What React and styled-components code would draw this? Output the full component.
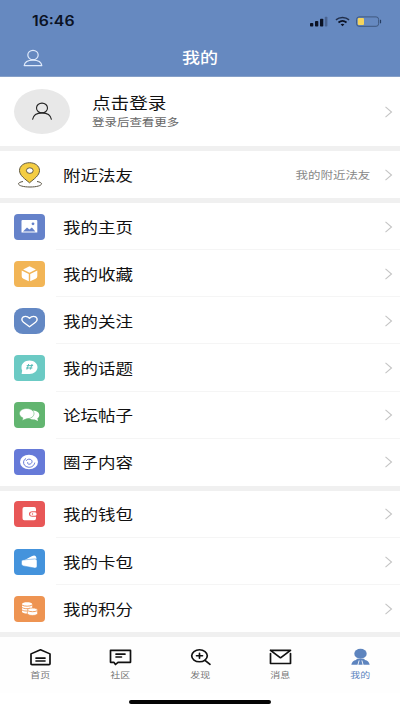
import React from "react";
import styled, { createGlobalStyle } from "styled-components";

const GlobalStyle = createGlobalStyle`
  * { box-sizing: border-box; }
  body {
    margin: 0;
    background: #fff;
    font-family: "Noto Sans CJK SC", "Noto Sans", sans-serif;
    color: #111;
  }
`;

const Screen = styled.div`
  width: 400px;
  height: 711px;
  overflow: hidden;
  display: flex;
  flex-direction: column;
  background: #fff;
`;

const Header = styled.header`
  height: 77px;
  flex: none;
  background: #6689c0;
  border-bottom: 1px solid #86a0c8;
`;

const StatusBar = styled.div`
  height: 40px;
  padding: 2px 18px 0 32px;
  display: flex;
  align-items: center;
  justify-content: space-between;
`;

const Clock = styled.span`
  font: 600 14px/20px Inter, sans-serif;
  color: #0b1224;
  transform: scaleX(1.13);
  transform-origin: left;
`;

const StatusIcons = styled.div`
  display: flex;
  align-items: center;
  gap: 6.5px;
`;

const TitleBar = styled.div`
  height: 36px;
  padding: 0 23px;
  display: grid;
  grid-template-columns: 1fr auto 1fr;
  align-items: center;
`;

const Title = styled.h1`
  margin: -2px 0 0;
  font-size: 15px;
  line-height: 22px;
  font-weight: 500;
  color: #fff;
  transform: scaleX(1.2);
`;

const Stretch = styled.span`
  display: block;
  white-space: nowrap;
  font-size: ${(p) => p.$size}px;
  line-height: ${(p) => p.$line || 20}px;
  color: ${(p) => p.$color || "#111"};
  transform: scaleX(${(p) => p.$x || 1.2});
  transform-origin: ${(p) => p.$origin || "left"};
`;

const Profile = styled.section`
  height: 69px;
  flex: none;
  padding: 0 7px 0 14px;
  display: flex;
  align-items: center;
`;

const Avatar = styled.div`
  width: 56px;
  height: 45px;
  border-radius: 50%;
  background: #e8e8e8;
  display: flex;
  align-items: center;
  justify-content: center;
`;

const ProfileText = styled.div`
  flex: 1;
  margin: -3px 0 0 21.5px;
`;

const Gap = styled.div`
  height: 5px;
  flex: none;
  background: #f0f0f0;
`;

const Row = styled.div`
  height: ${(p) => p.$height || 47.15}px;
  flex: none;
  padding-left: 14px;
  display: flex;
`;

const IconSlot = styled.div`
  width: 42px;
  display: flex;
  align-items: center;
`;

const RowBody = styled.div`
  flex: 1;
  padding: ${(p) => (p.$line ? "1px" : "0")} 7px 0 6.5px;
  display: flex;
  align-items: center;
  justify-content: space-between;
  border-bottom: ${(p) => (p.$line ? "1px solid #f5f5f5" : "none")};
`;

const RowEnd = styled.div`
  display: flex;
  align-items: center;
  gap: 14px;
`;

const Tile = styled.div`
  width: 31px;
  height: 26px;
  border-radius: ${(p) => p.$radius || "4px"};
  background: ${(p) => p.$color};
  display: flex;
`;

const TabBar = styled.nav`
  flex: none;
  height: 56px;
  padding-top: 11px;
  display: grid;
  grid-template-columns: repeat(5, 80px);
  background: #fefefe;
`;

const Tab = styled.div`
  display: flex;
  flex-direction: column;
  align-items: center;
`;

const HomeIndicator = styled.div`
  width: 142px;
  height: 4px;
  margin: 7px auto 0;
  border-radius: 2px;
  flex: none;
  background: #050505;
`;

const Chevron = () => (
  <svg width="9" height="12" viewBox="0 0 9 12" fill="none" stroke="#c4c4c4" strokeWidth="1.1">
    <path d="M1.5 .8 7.5 6 1.5 11.2" />
  </svg>
);

const glyphs = {
  picture: (
    <>
      <path fill="#fff" d="M8.500 6h13.800a1 1 0 0 1 1 1v11.500h-15.800V7a1 1 0 0 1 1-1Z" />
      <path fill="#6582ca" d="m9 17.500 4-4.100 2.400 2 2.500-1.800 3.500 3.900Z" />
      <circle cx="19" cy="9.800" r="1.400" fill="#6582ca" />
    </>
  ),
  box: (
    <g fill="#fff">
      <path d="m15.500 5.300 6.400 3.200-6.400 3.200-6.400-3.200Z" />
      <path d="m7.700 9.600 7.100 3.500v7.200l-5.400-2.600q-1.700-.8-1.700-2.400Z" />
      <path d="m23.300 9.600-7.100 3.500v7.200l5.400-2.600q1.700-.8 1.700-2.400Z" />
    </g>
  ),
  heart: (
    <path
      d="M15.500 18.800 9.500 14.300C6.400 11.700 8.200 8.300 11.400 8.300q2.600 0 4.100 2 1.500-2 4.100-2c3.200 0 5 3.400 1.900 6Z"
      fill="none" stroke="#fff" strokeWidth="1.300" strokeLinejoin="round"
    />
  ),
  topic: (
    <>
      <path fill="#fff" d="M15.500 5.600c4.500 0 8 2.900 8 6.600s-3.500 6.700-8 6.700H7.600l.6-3.300a6 6 0 0 1-.7-3.400c0-3.700 3.500-6.600 8-6.600Z" />
      <path stroke="#55bbb5" strokeWidth="1" d="m14.700 9-1.800 5.600M18.100 9l-1.800 5.600M12.700 10.600h6.400M12 13h6.400" />
    </>
  ),
  forum: (
    <>
      <path fill="#fff" d="M19.500 8.400c3.400.2 5.800 2.100 5.800 4.500 0 1.400-.7 2.600-1.900 3.400l.6 2.700-3.300-1.600c-3.900.4-6.700-1.300-6.900-3.700Z" />
      <path fill="#fff" stroke="#62b570" strokeWidth=".6" d="M12.600 6.500c4.200 0 7.400 2.200 7.400 5.100s-3.200 5.200-7.400 5.200l-4.500 1.800.8-2.700c-2.200-1-3.500-2.500-3.500-4.300 0-2.900 3-5.100 7.200-5.100Z" />
    </>
  ),
  circles: (
    <>
      <ellipse cx="15" cy="13" rx="9" ry="7.300" fill="#fff" />
      <g fill="none" stroke="#667ad8" strokeWidth="1" strokeLinecap="round">
        <path d="M20.700 14c-.8 3.300-3.700 4.600-6.500 4.200-3-.5-5-2.700-4.600-5.400.3-1.400 1-2.400 2-3.100" />
        <path d="M12.300 11.500c.9-1.600 3.800-1.900 5.200-.4 1.300 1.500.2 4-2.400 4.100-1.200 0-1.900-.9-1.500-1.700" />
      </g>
    </>
  ),
  wallet: (
    <>
      <path fill="#fff" d="M10.300 6h9.900q1.800 0 1.800 2v2.200h-3.500q-3.500 0-3.500 2.800t3.500 2.800H22v1.400q0 2-1.800 2h-9.900q-1.800 0-1.800-2V8q0-2 1.800-2Z" />
      <rect x="16.200" y="11.300" width="6.300" height="3.400" rx="1.500" fill="#fff" />
      <circle cx="18.500" cy="13" r=".7" fill="#e85757" />
    </>
  ),
  cards: (
    <>
      <path fill="#fff" d="m7.900 12.500 9.800-5.300q3.900-1.900 4.600 1.300l.3 1.300Z" />
      <path fill="#fff" stroke="#4493dc" strokeWidth=".5" d="M8.800 11 20.900 9.900q2.100-.1 2.100 1.800v5.600q0 2-2.200 1.800L9.300 16.900q-1.700-.3-1.800-2v-2.100q0-1.700 1.300-1.800Z" />
    </>
  ),
  coins: (
    <>
      <path fill="#fff" d="M8 8c0-2.500 10.200-2.500 10.200 0v7.700c0 2.400-10.200 2.400-10.200 0Z" />
      <path d="M8 9c2.200 1.600 8 1.600 10.200 0M8 11.500c2 1.400 5.600 1.500 8 .7M8 14c1.500 1 4 1.200 6 .9" fill="none" stroke="#ee9452" strokeWidth=".9" />
      <path fill="#fff" stroke="#ee9452" strokeWidth=".7" d="M13.400 14c0-2.600 10.200-2.600 10.200 0v3.500c0 2.600-10.200 2.600-10.200 0Z" />
      <path d="M14 14.800c2 1.200 7.100 1.200 9 0" fill="none" stroke="#ee9452" strokeWidth=".9" />
    </>
  ),
};

const Glyph = ({ name }) => (
  <svg width="31" height="26" viewBox="0 0 31 26">{glyphs[name]}</svg>
);

const personal = [
  ["我的主页", "picture", "#6582ca"],
  ["我的收藏", "box", "#f2b556"],
  ["我的关注", "heart", "#6388c4", "9px / 8px"],
  ["我的话题", "topic", "#6bcac4"],
  ["论坛帖子", "forum", "#62b570"],
  ["圈子内容", "circles", "#667ad8"],
];

const assets = [
  ["我的钱包", "wallet", "#e85757"],
  ["我的卡包", "cards", "#4493dc"],
  ["我的积分", "coins", "#ee9452"],
];

const Menu = ({ items }) =>
  items.map(([label, icon, color, radius], i) => (
    <Row key={label}>
      <IconSlot>
        <Tile $color={color} $radius={radius}><Glyph name={icon} /></Tile>
      </IconSlot>
      <RowBody $line={i < items.length - 1}>
        <Stretch $size={14.6}>{label}</Stretch>
        <Chevron />
      </RowBody>
    </Row>
  ));

const tabs = [
  ["首页", <path key="a" d="M2 6.200 11.500 1.800l9.500 4.400v10.300q0 1-1 1H3q-1 0-1-1ZM7 10.700h9M7 13.700h9" />],
  ["社区", <path key="b" d="M1.500 2.500h20v12.600H9l-2.500 2.300-1.500-2.300H1.500ZM7 6.500h9M7 9.500h5.500" />],
  ["发现", <g key="c"><ellipse cx="10.500" cy="8.200" rx="7.800" ry="6.300" /><path d="m16 13 5 4.200M7.500 8.200h6M10.500 5.700v5" /></g>],
  ["消息", <path key="d" d="M1.500 2.500h20l-10 7.800-10-7.800M1.500 5.800v10.500h20V5.800" />],
  ["我的", (
    <g key="e" fill="#5d84be" stroke="none">
      <ellipse cx="11.500" cy="6" rx="6.200" ry="5.200" />
      <path d="M8 11.300h7l1 1.200c2.500.6 4.200 2.200 4.700 5H2.300c.5-2.800 2.200-4.400 4.700-5Z" />
      <path d="M10 13.500 9 17.500M13 13.500l1 4" stroke="#fff" strokeWidth=".9" />
    </g>
  )],
];

export default function App() {
  return (
    <>
      <GlobalStyle />
      <Screen>
        <Header>
          <StatusBar>
            <Clock>16:46</Clock>
            <StatusIcons>
              <svg width="18" height="11" viewBox="0 0 18 11" fill="#0b1224">
                <rect x="0" y="7" width="3.300" height="3.500" rx=".8" />
                <rect x="5" y="5" width="3.300" height="5.500" rx=".8" />
                <rect x="10" y="2.700" width="3.300" height="7.800" rx=".8" />
                <rect x="14.800" y=".7" width="2.600" height="9.800" rx=".8" opacity=".3" />
              </svg>
              <svg width="15" height="11" viewBox="0 0 16 11" preserveAspectRatio="none" fill="none" stroke="#0b1224">
                <path d="M1 3.900C4.800.7 11.200.7 15 3.900" strokeWidth="1.400" opacity=".75" />
                <path d="M3.700 6.500c2.500-2 6.100-2 8.600 0" strokeWidth="1.700" />
                <path d="M6 8.300q2-1.300 4 0L8 10.200Z" fill="#0b1224" stroke="none" />
              </svg>
              <svg width="26" height="11" viewBox="0 0 26 11">
                <rect x=".6" y=".9" width="22" height="9.400" rx="2.500" fill="none" stroke="#3f587f" />
                <rect x="1.800" y="2.100" width="6.200" height="7" rx="1" fill="#f5d45d" />
                <path d="M24.500 3.800v3.500" stroke="#263d61" strokeWidth="1.200" />
              </svg>
            </StatusIcons>
          </StatusBar>
          <TitleBar>
            <svg width="20" height="18" viewBox="0 0 20 18" fill="none" stroke="#dfeafb" strokeWidth="1.200">
              <ellipse cx="10" cy="6" rx="5.200" ry="4.700" />
              <path d="M1.200 16.600c.4-3.600 3.800-5.500 8.800-5.500s8.400 1.900 8.800 5.500Z" strokeLinejoin="round" />
            </svg>
            <Title>我的</Title>
          </TitleBar>
        </Header>
        <Profile>
          <Avatar>
            <svg width="22" height="19" viewBox="0 0 22 19" fill="none" stroke="#242424" strokeWidth="1.100">
              <ellipse cx="11" cy="6" rx="5.500" ry="4.900" />
              <path d="M1.500 17.700c.8-4.400 4.400-6.800 9.500-6.800s8.700 2.400 9.500 6.800" />
            </svg>
          </Avatar>
          <ProfileText>
            <Stretch $size={15.500} $line={22}>点击登录</Stretch>
            <Stretch $size={10.400} $line={17} $color="#666">登录后查看更多</Stretch>
          </ProfileText>
          <Chevron />
        </Profile>
        <Gap />
        <Row $height={47}>
          <IconSlot>
            <svg width="31" height="30" viewBox="0 0 31 30">
              <path d="M9 21.500c-3 .5-4.500 1.400-4.500 2.300 0 1.800 4.800 3.200 11.500 3.200s11.500-1.400 11.500-3.200c0-1-1.500-1.800-4.500-2.300" fill="none" stroke="#5b5545" />
              <path d="M15.500 22.800C11 19 5.500 15.500 5.500 10.500 5.500 6 9.800 2.700 15.500 2.700s10 3.300 10 7.800c0 5-5.500 8.500-10 12.300Z" fill="#f4cd43" stroke="#514b35" strokeWidth=".9" />
              <ellipse cx="15.800" cy="10.600" rx="3.400" ry="2.800" fill="#fff" stroke="#514b35" strokeWidth=".9" />
            </svg>
          </IconSlot>
          <RowBody>
            <Stretch $size={14.600}>附近法友</Stretch>
            <RowEnd>
              <Stretch $size={10.400} $color="#888" $origin="right">我的附近法友</Stretch>
              <Chevron />
            </RowEnd>
          </RowBody>
        </Row>
        <Gap />
        <Menu items={personal} />
        <Gap />
        <Menu items={assets} />
        <Gap />
        <TabBar>
          {tabs.map(([label, icon], i) => (
            <Tab key={label}>
              <svg width="23" height="19" viewBox="0 0 23 20" preserveAspectRatio="none" fill="none" stroke="#111" strokeWidth="1.700" strokeLinejoin="round" strokeLinecap="round">
                {icon}
              </svg>
              <Stretch $size={8.300} $line={14} $origin="center" $color={i === 4 ? "#5d84be" : "#777"}>{label}</Stretch>
            </Tab>
          ))}
        </TabBar>
        <HomeIndicator />
      </Screen>
    </>
  );
}
